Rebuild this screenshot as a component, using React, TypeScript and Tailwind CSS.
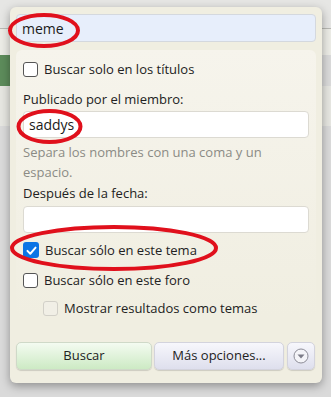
import React from 'react';

const Box: React.FC<{ checked?: boolean; disabled?: boolean }> = ({ checked, disabled }) => {
  if (checked) {
    return (
      <span className="flex items-center justify-center w-[16px] h-[16px] rounded-[3px] bg-[#0b74e5] shrink-0">
        <svg viewBox="0 0 16 16" className="w-[13px] h-[13px]">
          <path d="M3 8.5 L6.5 12 L13 4.5" fill="none" stroke="#fff" strokeWidth="2.4" strokeLinecap="round" strokeLinejoin="round" />
        </svg>
      </span>
    );
  }
  return (
    <span
      className={
        disabled
          ? 'block w-[15px] h-[15px] rounded-[3px] border border-[#d2d0c8] bg-[#f1efe6] shrink-0'
          : 'block w-[15px] h-[15px] rounded-[3px] border border-[#555] bg-white shrink-0'
      }
    />
  );
};

const Check: React.FC<{ label: string; checked?: boolean; disabled?: boolean; className?: string }> = ({ label, checked, disabled, className = '' }) => (
  <label className={`flex items-center gap-[6px] h-[20px] ${className}`}>
    <Box checked={checked} disabled={disabled} />
    <span className="text-[13px] text-[#222] pt-[2px]">{label}</span>
  </label>
);

const App: React.FC = () => {
  return (
    <div className="relative w-[331px] h-[397px] overflow-hidden bg-[#dadada] font-['Open_Sans',sans-serif]">
      {/* page behind the popup */}
      <div className="h-[29px] bg-[#e6e6e4] border-b border-[#b9b9b4]" />
      <div className="h-[26px] bg-[#ecece6]" />
      <div className="h-[31px] w-[20px] bg-[#5d8c5b]" />
      <div className="h-[40px] bg-[#e6e6e1]" />

      {/* popup */}
      <div className="absolute left-[10px] top-[7px] w-[312px] h-[376px] rounded-[6px] bg-[#f0eee1] shadow-[0_3px_10px_rgba(0,0,0,0.35)] px-[6px] pt-[7px]">
        <div className="h-[28px] rounded-[4px] border border-[#d4d8de] bg-[#e7eefb] px-[5px] flex items-center text-[14px] text-[#1a1a1a]">
          meme
        </div>

        <div className="mt-[8px] rounded-t-[6px] bg-gradient-to-b from-[#f6f4ec] to-[#f0eee1] px-[7px] pt-[9px]">
          <Check label="Buscar solo en los títulos" />

          <div className="mt-[11px] text-[13px] text-[#222] leading-[18px]">Publicado por el miembro:</div>
          <div className="mt-[3px] h-[27px] rounded-[4px] border border-[#dcdad2] bg-white px-[5px] flex items-center text-[14px] text-[#1a1a1a]">
            saddys
          </div>
          <div className="mt-[4px] text-[13px] leading-[20px] text-[#8b8b85] pr-[30px]">
            Separa los nombres con una coma y un espacio.
          </div>

          <div className="mt-[2px] text-[13px] text-[#222] leading-[18px]">Después de la fecha:</div>
          <div className="mt-[4px] h-[27px] rounded-[4px] border border-[#dcdad2] bg-white" />

          <Check label="Buscar sólo en este tema" checked className="mt-[7px]" />
          <Check label="Buscar sólo en este foro" className="mt-[10px]" />
          <Check label="Mostrar resultados como temas" disabled className="mt-[8px] pl-[20px]" />
        </div>

        <div className="mt-[24px] flex gap-[2px] h-[28px]">
          <button className="w-[136px] rounded-[5px] border border-[#cfd9c8] bg-gradient-to-b from-[#f4fbf1] to-[#cdeac4] text-[13px] text-[#222] shadow-[0_1px_1px_rgba(0,0,0,0.15)]">
            Buscar
          </button>
          <button className="w-[130px] rounded-[5px] border border-[#d3d3dd] bg-gradient-to-b from-[#f7f7fc] to-[#dedfed] text-[13px] text-[#222] shadow-[0_1px_1px_rgba(0,0,0,0.15)]">
            Más opciones...
          </button>
          <button className="ml-[1px] w-[28px] rounded-[5px] border border-[#d3d3dd] bg-gradient-to-b from-[#f7f7fc] to-[#dedfed] flex items-center justify-center shadow-[0_1px_1px_rgba(0,0,0,0.15)]">
            <svg viewBox="0 0 16 16" className="w-[16px] h-[16px]">
              <circle cx="8" cy="8" r="7" fill="#f4f4f8" stroke="#8d8d98" strokeWidth="1" />
              <path d="M4.5 6.5 L11.5 6.5 L8 10.5 Z" fill="#7c7c88" />
            </svg>
          </button>
        </div>
      </div>

      {/* red annotation marks */}
      <svg className="absolute left-0 top-0 pointer-events-none" width="331" height="397" viewBox="0 0 331 397">
        <ellipse cx="44" cy="30.5" rx="34" ry="15.5" fill="none" stroke="#e0101c" strokeWidth="4" />
        <ellipse cx="49.5" cy="126.5" rx="31" ry="15.5" fill="none" stroke="#e0101c" strokeWidth="4" />
        <ellipse cx="114" cy="248" rx="102" ry="21" fill="none" stroke="#e0101c" strokeWidth="4" />
      </svg>
    </div>
  );
};

export default App;
